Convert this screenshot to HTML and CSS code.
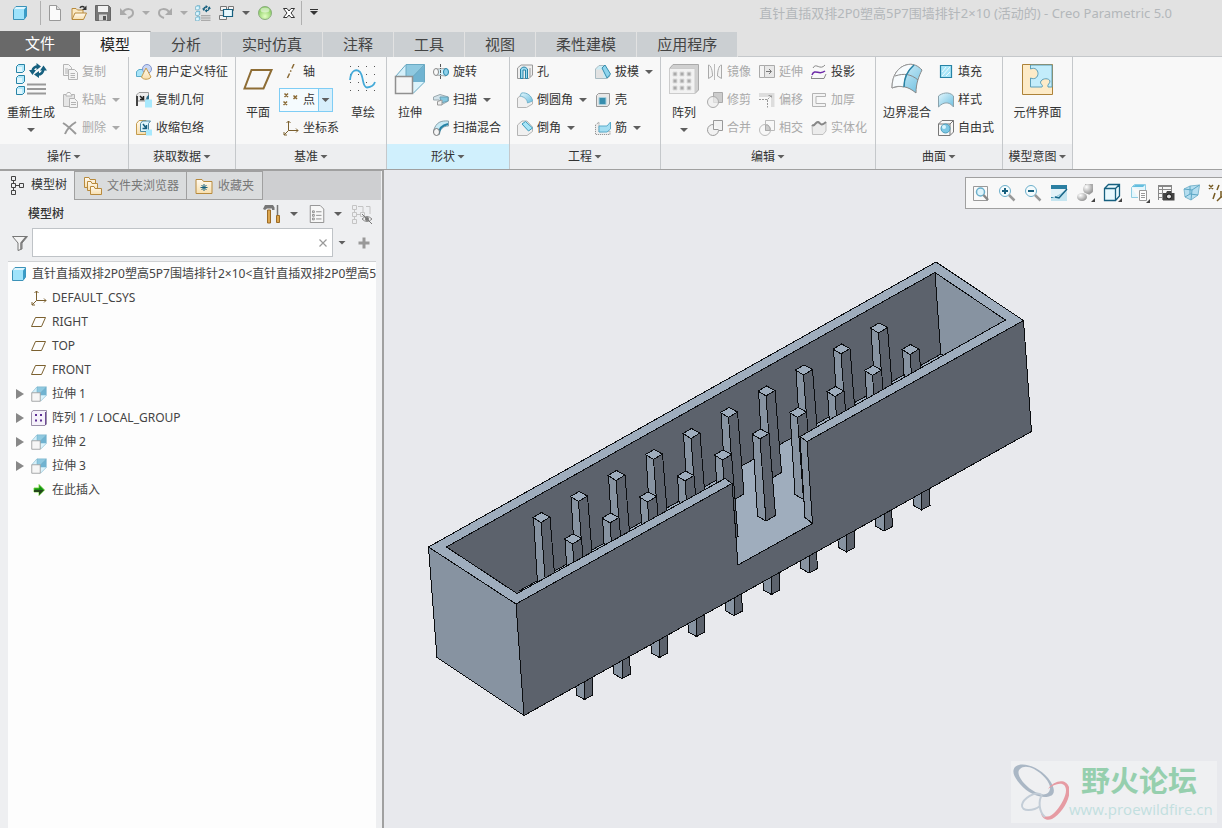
FILE: index.html
```html
<!DOCTYPE html>
<html lang="zh-CN">
<head>
<meta charset="utf-8">
<title>Creo Parametric 5.0</title>
<link rel="stylesheet" href="styles.css">
</head>
<body>
<svg class="defs" aria-hidden="true">
  <defs>
    <linearGradient id="blue" x1="0" y1="0" x2="1" y2="1"><stop offset="0" stop-color="#e4f7fd"/><stop offset="1" stop-color="#6dbfe0"/></linearGradient>
    <linearGradient id="gray" x1="0" y1="0" x2="1" y2="1"><stop offset="0" stop-color="#fafafa"/><stop offset="1" stop-color="#b4b4b4"/></linearGradient>
    <linearGradient id="sand" x1="0" y1="0" x2="0" y2="1"><stop offset="0" stop-color="#fffaf0"/><stop offset="1" stop-color="#f7dfae"/></linearGradient>
    <radialGradient id="green" cx=".5" cy=".75" r=".7"><stop offset="0" stop-color="#e3ffc4"/><stop offset="1" stop-color="#7cc653"/></radialGradient>
    <radialGradient id="orb" cx=".35" cy=".3" r=".8"><stop offset="0" stop-color="#fff"/><stop offset="1" stop-color="#8a8a8a"/></radialGradient>
  </defs>
  <symbol id="i-cube" viewBox="0 0 16 16"><path d="M1.500 4.500L4 1.500H14.500V11L12 14.500H1.500Z" fill="#9fe3fb" stroke="#3c92b8"/><path d="M12 4.500L14.500 1.500V11L12 14.500Z" fill="#3a9cc7"/><path d="M2 4L4 2H14L12 4Z" fill="#dff6fe"/></symbol>
  <symbol id="i-new" viewBox="0 0 16 16"><path d="M2.500 .5H9.500L13.500 4.500V15.500H2.500Z" fill="#fafafa" stroke="#999"/><path d="M9.500 .5V4.500H13.500" fill="#ddd" stroke="#999"/></symbol>
  <symbol id="i-open" viewBox="0 0 16 16"><path d="M1 14V3.500H5L6.500 5H12V8" fill="#fbe9c3" stroke="#b88a3c"/><path d="M1 14.500L4 8H15.500L12.500 14.500Z" fill="url(#sand)" stroke="#b88a3c"/><path d="M9 3C10 1 12 1 13.500 2.500" fill="none" stroke="#333" stroke-width="1.500"/><path d="M15.500 .5V5H11Z" fill="#333"/></symbol>
  <symbol id="i-save" viewBox="0 0 16 16"><path d="M.5 .5H13.500L15.500 2.500V15.500H.5Z" fill="#777" stroke="#666"/><path d="M3 1H13V7H3Z" fill="#f2f2f2"/><path d="M4 9.500H12V15.500H4Z" fill="#d4d4d4"/><path d="M8 11H11V15H8Z" fill="#555"/></symbol>
  <symbol id="i-undo" viewBox="0 0 16 16"><path d="M1 3V10H8Z" fill="#aaa"/><path d="M4 7C7 3 14 3 14 8C14 11 12 12 9 13" fill="none" stroke="#aaa" stroke-width="2"/></symbol>
  <symbol id="i-redo" viewBox="0 0 16 16"><path d="M15 3V10H8Z" fill="#aaa"/><path d="M12 7C9 3 2 3 2 8C2 11 4 12 7 13" fill="none" stroke="#aaa" stroke-width="2"/></symbol>
  <symbol id="i-regen" viewBox="0 0 32 32"><g fill="#b5e9fa" stroke="#2783a6"><path d="M1.500 3.500L3.500 1.500H9.500V7.500L7.500 9.500H1.500Z"/><path d="M1.500 14.500L3.500 12.500H9.500V18.500L7.500 20.500H1.500Z"/><path d="M1.500 25.500L3.500 23.500H9.500V29.500L7.500 31.500H1.500Z"/></g><g fill="#fff"><path d="M2 4H7V9H2Z" opacity=".6"/><path d="M2 15H7V20H2Z" opacity=".6"/><path d="M2 26H7V31H2Z" opacity=".6"/></g><path d="M12 21.500H31M12 26H31M12 30.500H31" stroke="#999" stroke-width="2"/><g fill="none" stroke="#17607f" stroke-width="2.500"><path d="M17.500 8C18 5 20 3.500 23 3.500"/><path d="M28.500 6C28 9.500 26 11.500 23 11.500"/></g><path d="M21.500 0L26 3.500L21.500 7ZM14 7H21L17.500 12ZM25 7.500H32L28.500 2.500ZM24 8L19 11.500L24 15Z" fill="#17607f"/></symbol>
  <symbol id="i-windows" viewBox="0 0 16 16"><g fill="#f4f4f4" stroke="#777"><path d="M1.500 1.500H7.500V5.500H1.500ZM9.500 1.500H14.500V5.500H9.500ZM.5 10.500H7.500V14.500H.5Z"/></g><path d="M4.500 4.500H13.500V11.500H4.500Z" fill="#e8f8fd" stroke="#17607f" stroke-width="1.200"/></symbol>
  <symbol id="i-ball" viewBox="0 0 16 16"><circle cx="8" cy="8" r="6.500" fill="url(#green)" stroke="#8cae80"/><ellipse cx="8" cy="5" rx="4.500" ry="2.500" fill="#fff" opacity=".5"/></symbol>
  <symbol id="i-close" viewBox="0 0 16 16"><path d="M2.500 3.500H6L8 6L10 3.500H13.500L10 8L13.500 12.500H10L8 10L6 12.500H2.500L6 8Z" fill="#fff" stroke="#333"/></symbol>
  <symbol id="i-copy" viewBox="0 0 16 16"><g fill="#f4f4f4" stroke="#b4b4b4"><path d="M1.500 .5H6.500L9.500 3.500V11.500H1.500Z"/><path d="M6.500 5.500H12.500L15.500 8.500V15.500H6.500Z"/></g><path d="M3 5H6M3 7H6M3 9H6M8.500 9.500H13M8.500 11.500H13M8.500 13.500H13" stroke="#b4b4b4"/></symbol>
  <symbol id="i-paste" viewBox="0 0 16 16"><path d="M1.500 2.500H12.500V14.500H1.500Z" fill="#e6e6e6" stroke="#b4b4b4"/><path d="M4 3C4 2 5 2 5.500 .5H8C8 2 10 2 10 4H4Z" fill="#fafafa" stroke="#b4b4b4"/><path d="M7.500 6.500H12.500L15.500 9.500V15.500H7.500Z" fill="#f4f4f4" stroke="#b4b4b4"/><path d="M9 10.500H14M9 12.500H14" stroke="#b4b4b4"/></symbol>
  <symbol id="i-delete" viewBox="0 0 16 16"><path d="M1 3C6 6 10 10 14 14M14 2C9 5 5 9 3 14" stroke="#999" stroke-width="2" fill="none"/></symbol>
  <symbol id="i-udf" viewBox="0 0 16 16"><path d="M.5 7.500L3 5.500H10V12.500H.5Z" fill="#a9e4f8" stroke="#5aaccb"/><circle cx="11" cy="5" r="4.500" fill="#c9d7f5" stroke="#8195cc"/><path d="M10 4L5.500 13C7 16 13 16 15 13Z" fill="url(#sand)" stroke="#c49b4c"/></symbol>
  <symbol id="i-copygeo" viewBox="0 0 16 16"><path d="M.5 3L3 .5H12.500V5L10 7V9H.5Z" fill="#ececec" stroke="#999"/><path d="M1 4V14" stroke="#444" stroke-width="2"/><path d="M4 4L7 7M7.500 4V7.500H4" stroke="#222" stroke-width="1.500" fill="none"/><path d="M10.500 8V5L13 2.500V7.500" fill="#2f6f8c"/><path d="M9 7.500H16V15.500H9Z" fill="#a8e9fd"/></symbol>
  <symbol id="i-shrink" viewBox="0 0 16 16"><path d="M.5 3.500L3 .5H10V14.500H.5Z" fill="url(#sand)" stroke="#c49b4c"/><path d="M4.500 3.500L6.500 1H14.500L12.500 3.500V11.500H4.500Z" fill="#dff5fc" stroke="#4c8ba3"/><path d="M7 4L10 8M10.500 5V8.500H6.500" stroke="#17607f" stroke-width="1.500" fill="none"/><path d="M10 9.500H16V15.500H10Z" fill="#a8e9fd"/></symbol>
  <symbol id="i-plane" viewBox="0 0 32 32"><path d="M9.500 7H29.500L21.500 25.500H2.500Z" fill="none" stroke="#8e6d35" stroke-width="2"/></symbol>
  <symbol id="i-axis" viewBox="0 0 16 16"><path d="M11 0L4 15" stroke="#8a6a35" stroke-width="1.500" stroke-dasharray="5 2 1.500 2" fill="none"/></symbol>
  <symbol id="i-points" viewBox="0 0 16 16"><path d="M1.500 1.500L5 5M5 1.500L1.500 5M10.500 3.500L14 7M14 3.500L10.500 7M.5 9.500L4 13M4 9.500L.5 13" stroke="#8a6a35" stroke-width="1.500" fill="none"/></symbol>
  <symbol id="i-csys" viewBox="0 0 16 16"><path d="M5.500 1V10.500H15M5.500 10.500L1 15M3.500 3L5.500 1L7.500 3M13 8.500L15 10.500L13 12.500M1 12V15H4" stroke="#7b602f" fill="none"/></symbol>
  <symbol id="i-sketch" viewBox="0 0 32 32"><path d="M3 3.500H28M3 11.500H28M3 19.500H28M3 27.500H28" stroke="#555" stroke-dasharray="1 7"/><path d="M3 17C4 6 10 6 13 9C17 14 15 24 20 24.500C25 24 27 22 28 19" fill="none" stroke="#43a9d8" stroke-width="1.800"/></symbol>
  <symbol id="i-extrude" viewBox="0 0 32 32"><path d="M1.500 13.500L12 1.500H30.500V19L19 30.500H1.500Z" fill="#d5f0fa"/><path d="M12 2H30L19 13.500H12Z" fill="#8fc9e0"/><path d="M30.500 2V19H18.500V13.500Z" fill="#70b3d1"/><path d="M18.500 19H30.500L18.500 30.500Z" fill="#dcf4fc"/><path d="M1.500 13.500L12 1.500H30.500V19L19 30.500M19 13.500L30.500 1.500M12 2V13" fill="none" stroke="#6aa9c2"/><path d="M1.500 13.500H18.500V30.500H1.500Z" fill="#f6f6f6" stroke="#909090" stroke-width="1.500"/></symbol>
  <symbol id="i-revolve" viewBox="0 0 16 16"><path d="M3 5L13 4.500V12L3 11Z" fill="#d7f1fa" stroke="#aaa"/><ellipse cx="3" cy="8" rx="2.500" ry="3.500" fill="#fafafa" stroke="#888"/><ellipse cx="13" cy="8" rx="2.500" ry="3.500" fill="#8ed2ec" stroke="#2783a6"/><path d="M7.500 0V16" stroke="#555" stroke-dasharray="3 1 1 1"/></symbol>
  <symbol id="i-sweep" viewBox="0 0 16 16"><path d="M.5 5L7 2.500L15.500 5V9L9 12.500L6 8L.5 8Z" fill="#d3e3ea" stroke="#9aa8ae"/><path d="M7 5L15 5V9L8 11Z" fill="#83c8e1" stroke="#6aa1b6"/><path d="M4.500 9.500L9 8V13H4.500Z" fill="#eee" stroke="#999"/></symbol>
  <symbol id="i-blend" viewBox="0 0 16 16"><path d="M.5 11C3 2 8 .5 15.500 1V6C10 6 7 9 6 15Z" fill="#c8eaf5" stroke="#8aa2ac"/><path d="M6 14C6 8 10 5 15 4" fill="none" stroke="#2783a6" stroke-width="2"/><ellipse cx="3.500" cy="12" rx="3" ry="3.500" fill="#f5f5f5" stroke="#777"/></symbol>
  <symbol id="i-hole" viewBox="0 0 16 16"><path d="M.5 4L4 1H15.500V11L12 14.500H.5Z" fill="#eee" stroke="#999"/><path d="M3.500 5Q7 1 10.500 5V14.500H8.500V6H6V14.500H3.500Z" fill="#9bdaf0" stroke="#2783a6"/><path d="M13 4V13" stroke="#999"/></symbol>
  <symbol id="i-round" viewBox="0 0 16 16"><path d="M.5 6L6 2C11 1 15 5 15.500 10V12L9.500 15.500H.5Z" fill="#f0f0f0" stroke="#b4b4b4"/><path d="M4.500 1C10 0 15 4 15.500 9L10.500 11C10.500 8 8 5 3 4Z" fill="url(#blue)" stroke="#77b5cd"/></symbol>
  <symbol id="i-chamfer" viewBox="0 0 16 16"><path d="M.5 5L5 1H10L15.500 7V11.500L10 15.500H.5Z" fill="#f0f0f0" stroke="#b4b4b4"/><path d="M5 4L8.500 1.500L15.500 8L11.500 11Z" fill="#a7e4f7" stroke="#3c9abb"/></symbol>
  <symbol id="i-draft" viewBox="0 0 16 16"><path d="M.5 5L4 1.500H9L15 12L12 14.500H.5Z" fill="#ccebf4" stroke="#a9bbc2"/><path d="M1 5.500H8V14H1Z" fill="#e2e2e2"/><path d="M7 4L10 1L15.500 10L12 14Z" fill="#8ed4ed" stroke="#378eae"/></symbol>
  <symbol id="i-shell" viewBox="0 0 16 16"><path d="M1.500 3.500L3.500 1.500H14.500V12L12.500 14.500H1.500Z" fill="#e8e8e8" stroke="#999"/><path d="M4 5.500H11V12.500H4Z" fill="#378eae" stroke="#a8cfdc"/></symbol>
  <symbol id="i-rib" viewBox="0 0 16 16"><path d="M.5 5L4 2V12L15 11V14.500H.5Z" fill="#eee" stroke="#888" stroke-dasharray="1 1"/><path d="M4 6H12L15.500 2V9L12 12H4Z" fill="#a4def2" stroke="#5aaccb"/></symbol>
  <symbol id="i-pattern" viewBox="0 0 32 32"><path d="M1.500 5.500L5 1.500H30.500V27L27 30.500H1.500Z" fill="#d0d0d0" stroke="#aaa"/><path d="M1.500 5.500H27V30.500H1.500Z" fill="#f2f2f2" stroke="#ccc"/><path fill="#aaa" stroke="#ddd" d="M5 9h4v4h-4zM12 9h4v4h-4zM19 9h4v4h-4zM5 16h4v4h-4zM12 16h4v4h-4zM19 16h4v4h-4zM5 23h4v4h-4zM12 23h4v4h-4zM19 23h4v4h-4z"/></symbol>
  <symbol id="i-mirror" viewBox="0 0 16 16"><path d="M1.500 1V14.500L5.500 12C5.500 7 4 1 1.500 1ZM14.500 1V14.500L10.500 12C10.500 7 12 1 14.500 1Z" fill="#f4f4f4" stroke="#aaa"/><path d="M7.500 0V16" stroke="#bbb"/></symbol>
  <symbol id="i-trim" viewBox="0 0 16 16"><path d="M6.500 .5H15.500V10.500H6.500Z" fill="#ccc" stroke="#aaa"/><circle cx="6" cy="10" r="5.500" fill="#eee" fill-opacity=".7" stroke="#aaa"/></symbol>
  <symbol id="i-merge" viewBox="0 0 16 16"><path d="M6.500 4V.5H15.500V10.500H11.500M6.500 4V9.500H11.500M11.500 10.500A5.500 5.500 0 1 1 6.500 4.500" fill="#f2f2f2" stroke="#999"/></symbol>
  <symbol id="i-extend" viewBox="0 0 16 16"><path d="M.5 1.500H5.500V13.500H.5Z" fill="#f4f4f4" stroke="#aaa"/><path d="M5.500 1.500H15.500V13.500H5.500Z" fill="#e8e8e8" stroke="#aaa"/><path d="M7 7.500H12M10 5L12.500 7.500L10 10" fill="none" stroke="#777"/></symbol>
  <symbol id="i-offset" viewBox="0 0 16 16"><path d="M0 1H15.500V15H12V5H0Z" fill="#ddd"/><path d="M0 7.500H8.500V15.500M8.500 7.500L12 4M9.500 3.500H12.500V6.500" fill="none" stroke="#999" stroke-dasharray="2 1"/></symbol>
  <symbol id="i-intersect" viewBox="0 0 16 16"><path d="M6.500 .5H15.500V10.500H6.500Z" fill="none" stroke="#bbb"/><circle cx="6" cy="10" r="5.500" fill="none" stroke="#bbb"/><path d="M6.500 5H9L11 8V10.500H6.500Z" fill="#ccc" stroke="#aaa"/></symbol>
  <symbol id="i-project" viewBox="0 0 16 16"><path d="M2 4C5 -2 9 7 14 1M1 12L0 14.500H13L15 10" fill="none" stroke="#888"/><path d="M1 11C4 4 8 12 14 7" fill="none" stroke="#6d2aa8" stroke-width="1.500"/></symbol>
  <symbol id="i-thicken" viewBox="0 0 16 16"><path d="M1.500 1.500H14.500V4.500H5V11.500H14.500V14.500H1.500Z" fill="#f4f4f4" stroke="#b4b4b4"/></symbol>
  <symbol id="i-solidify" viewBox="0 0 16 16"><path d="M1 5C4 7 4 2 7 1.500C10 3 9 7 15 2V11L12 14.500H1.500Z" fill="#ececec" stroke="#c0c0c0"/><path d="M1 5C4 7 4 2 7 2C10 3 9 7 15 2" fill="none" stroke="#888" stroke-width="2"/></symbol>
  <symbol id="i-boundary" viewBox="0 0 32 32"><path d="M1 25C1 11 8 4 15 2C23 0 27 3 31 7C28 13 25 20 25 30C17 23 9 22 1 25Z" fill="url(#blue)" stroke="#888"/><path d="M1 25C1 11 8 4 15 2C18 1 21 1 23 2C16 8 13 15 13 24C9 23 5 23 1 25Z" fill="#f7fbfd" stroke="#999"/><path d="M4 13C13 10 20 11 27 17" fill="none" stroke="#888"/><path d="M23 2C16 8 13 15 13 24" fill="none" stroke="#2783a6" stroke-width="1.500"/></symbol>
  <symbol id="i-fill" viewBox="0 0 16 16"><path d="M2.500 1.500H13.500V13.500H2.500Z" fill="#a9e6f8" stroke="#2783a6" stroke-width="1.200"/><path d="M4 12L12 3M4 8L8 3M8 12L12 8" stroke="#effbff"/></symbol>
  <symbol id="i-style" viewBox="0 0 16 16"><path d="M.5 4C4 1 11 -1 15.500 4V15C11 9 5 10 .5 15Z" fill="url(#blue)" stroke="#8aa2ac"/></symbol>
  <symbol id="i-freestyle" viewBox="0 0 16 16"><path d="M.5 4L4 .5H15.500V12L12 15.500H.5ZM.5 4H12V15.500M12 4L15.500 .5" fill="none" stroke="#777"/><circle cx="7.500" cy="8.500" r="4.500" fill="#7cc7e4" stroke="#4d9ebc"/><circle cx="6" cy="7" r="2" fill="#d8f4fc"/></symbol>
  <symbol id="i-puzzle" viewBox="0 0 32 32"><path d="M.5 1.500H30.500V31.500H.5Z" fill="#fdebc8" stroke="#ad8238"/><path d="M8.500 2V6C13 4 16 7 16 10.500C16 14 13 17 8.500 15V24H20C22 22 17 21 19 18C21 15 27 15 28 18C28 21 25 21 26 24H30V2Z" fill="#c3edfb" stroke="#5d9fb8"/></symbol>
  <symbol id="i-tree" viewBox="0 0 14 20"><path d="M1.500 1.500H5.500V5.500H1.500ZM1.500 8.500H5.500V12.500H1.500ZM1.500 15.500H5.500V19.500H1.500ZM9.500 8.500H13.500V12.500H9.500ZM3.500 5.500V8.500M3.500 12.500V15.500M5.500 10.500H9.500" fill="none" stroke="#444"/></symbol>
  <symbol id="i-folders" viewBox="0 0 20 20"><g fill="url(#sand)" stroke="#b88a3c"><path d="M1.500 1.500H6L7 3.500H12.500V11.500H1.500Z"/><path d="M4.500 5.500H8L9 7.500H14.500V14.500H4.500Z"/><path d="M7.500 10.500H11L12 12.500H18.500V18.500H7.500Z"/></g></symbol>
  <symbol id="i-fav" viewBox="0 0 18 18"><path d="M1 2.500H7L8.500 4.500H17V16.500H1Z" fill="url(#sand)" stroke="#b88a3c"/><path d="M9 7V14M5.500 10.500H12.500M6.500 8L11.500 13M11.500 8L6.500 13" stroke="#17607f"/></symbol>
  <symbol id="i-tools" viewBox="0 0 20 20"><path d="M1 5L3 1H11L12.500 3.500V6H10V4.500H5L3 6Z" fill="#777"/><path d="M5.500 6H8.500V19H5.500Z" fill="#dca64f" stroke="#9c6b26"/><path d="M15.500 1V11" stroke="#777" stroke-width="1.500"/><path d="M14.500 11.500H17.500V18.500H14.500Z" fill="#dca64f" stroke="#9c6b26"/></symbol>
  <symbol id="i-list" viewBox="0 0 18 20"><path d="M1.500 .5H12.500L16.500 4.500V19.500H1.500Z" fill="#f7f7f7" stroke="#888"/><path d="M8 7.500H14M8 11.500H14M8 15.500H14" stroke="#888"/><path d="M4 6.500h2v2h-2zM4 10.500h2v2h-2zM4 14.500h2v2h-2z" fill="none" stroke="#888"/></symbol>
  <symbol id="i-hide" viewBox="0 0 20 20"><path d="M.5 1.500H4.500V5.500H.5ZM.5 8.500H4.500V12.500H.5ZM.5 15.500H4.500V19.500H.5ZM8.500 8.500H12.500V12.500H8.500ZM2.500 5.500V8.500M2.500 12.500V15.500M4.500 10.500H8.500M6 2.500H11V8M14 2.500H18V10" fill="none" stroke="#c4c4c4"/><path d="M10 15Q15 10 20 15Q15 20 10 15Z" fill="#eee" stroke="#888"/><circle cx="15" cy="15" r="2" fill="#777"/><path d="M10 10L20 20" stroke="#777"/></symbol>
  <symbol id="i-funnel" viewBox="0 0 16 16"><path d="M.5 1.500H15.500L10 8V14L6 15.500V8Z" fill="#f4f4f4" stroke="#777"/><path d="M14 2L9 8V14" stroke="#777" stroke-width="1.500" fill="none"/></symbol>
  <symbol id="i-splane" viewBox="0 0 16 16"><path d="M4.500 3.500H14.500L10.500 12.500H.5Z" fill="none" stroke="#7b602f"/></symbol>
  <symbol id="i-group" viewBox="0 0 16 16"><path d="M.5 2.500L2 .5H15.500V14L14 15.500H.5Z" fill="#f5f1fa" stroke="#9a8fa8"/><path d="M4 4h2v2h-2zM9 4h2v2h-2zM4 9.500h2v2h-2zM9 9.500h2v2h-2z" fill="#5e2f95"/><path d="M14.500 2V15" stroke="#6f4b96"/></symbol>
  <symbol id="i-insert" viewBox="0 0 16 16"><path d="M3 6H8V2.500L13.500 8L8 13.500V10H3Z" fill="#149414" stroke="#6ccf32" stroke-width=".8"/><path d="M3 8H13L8 13V10H3Z" fill="#24451a"/></symbol>
  <symbol id="i-refit" viewBox="0 0 18 18"><path d="M1.500 2.500H15.500V16.500H1.500Z" fill="#fafafa" stroke="#999"/><circle cx="8.500" cy="8" r="4" fill="#dff4fb" stroke="#6cafcb" stroke-width="1.500"/><path d="M11.500 11L16 16" stroke="#888" stroke-width="2.500"/></symbol>
  <symbol id="i-zoomin" viewBox="0 0 18 18"><circle cx="7" cy="7" r="5.500" fill="#f4fbfd" stroke="#6cafcb"/><path d="M4 7H10M7 4V10" stroke="#17607f" stroke-width="2"/><path d="M11 11L16.500 16.500" stroke="#999" stroke-width="2.500"/></symbol>
  <symbol id="i-zoomout" viewBox="0 0 18 18"><circle cx="7" cy="7" r="5.500" fill="#f4fbfd" stroke="#6cafcb"/><path d="M4 7H10" stroke="#17607f" stroke-width="2"/><path d="M11 11L16.500 16.500" stroke="#999" stroke-width="2.500"/></symbol>
  <symbol id="i-repaint" viewBox="0 0 18 18"><path d="M1 1H17V17H1Z" fill="#9ed2e6"/><path d="M1 1H17V5C12 8 9 12 4 13L1 15Z" fill="#2b7fa2"/><path d="M1 5H17V6C12 8 9 12 4 13H1Z" fill="#e3f2f8"/><path d="M1 17V14C8 14 13 10 17 5V17Z" fill="#c5e5f0"/><path d="M5 13L9 14L17 5" stroke="#176486" stroke-width="1.500" fill="none"/></symbol>
  <symbol id="i-shade" viewBox="0 0 20 20"><path d="M9 1H17V9L13 12L9 8Z" fill="#aaa"/><circle cx="12" cy="6" r="5" fill="url(#orb)"/><ellipse cx="6" cy="14" rx="5" ry="4" fill="url(#orb)"/><path d="M19 15V19H15Z" fill="#444"/></symbol>
  <symbol id="i-display" viewBox="0 0 20 20"><path d="M1.500 5.500L5.500 1.500H16.500V13L12.500 17.500H1.500ZM1.500 5.500H12.500V17.500M12.500 5.500L16.500 1.500" fill="#e9f9fe" stroke="#17607f" stroke-width="1.300"/><path d="M19 15V19H15Z" fill="#444"/></symbol>
  <symbol id="i-views" viewBox="0 0 20 20"><path d="M1.500 4.500L4.500 1.500H15.500V8M1.500 4.500V14.500H8" fill="#e3f6fc" stroke="#8fcde3"/><path d="M2 4L5 2H15L13 4Z" fill="#64bedf"/><path d="M9.500 7.500H16.500V17.500H9.500Z" fill="#fff" stroke="#999"/><path d="M11 10.500H15M11 12.500H15M11 14.500H15" stroke="#999"/><path d="M20 16V20H16Z" fill="#444"/></symbol>
  <symbol id="i-camera" viewBox="0 0 18 18"><path d="M1.500 1.500H14.500V8M1.500 5.500H14M1.500 9.500H6M1.500 13.500H6M1.500 1.500V16M5.500 1.500V16" stroke="#888" fill="none"/><path d="M1 1H15V3H1Z" fill="#888"/><path d="M6 9H9L10 7H14L15 9H17.500V16.500H6Z" fill="#444"/><circle cx="12" cy="12.500" r="2.500" fill="#ddd" stroke="#111"/></symbol>
  <symbol id="i-persp" viewBox="0 0 18 18"><path d="M1 5L7 2L16.500 1L15 11L8 16L2 13Z" fill="#b5def0" stroke="#7fb8cf"/><path d="M1 5L9 6L8 16M9 6L16.500 1M7 2V10L2 13M7 10L15 11" stroke="#5ba6c4" fill="none"/></symbol>
  <symbol id="i-datum" viewBox="0 0 20 20"><path d="M1 2L5 6M5 2L1 6M11 2L9 7M7 10L5 16M13 8V14H19M13 14L9 18M18 2L15 6" stroke="#755921" stroke-width="1.500" fill="none"/></symbol>
</svg>

<header class="titlebar">
  <div class="quick">
    <button class="qb" aria-label="Creo"><svg class="i16"><use href="#i-cube"/></svg></button>
    <span class="sep wide"></span>
    <button class="qb" aria-label="新建"><svg class="i16"><use href="#i-new"/></svg></button>
    <button class="qb" aria-label="打开"><svg class="i16"><use href="#i-open"/></svg></button>
    <button class="qb" aria-label="保存"><svg class="i16"><use href="#i-save"/></svg></button>
    <button class="qb" aria-label="撤销"><svg class="i16"><use href="#i-undo"/></svg></button>
    <button class="qc" aria-label="撤销列表"><i class="caret dim"></i></button>
    <button class="qb" aria-label="重做"><svg class="i16"><use href="#i-redo"/></svg></button>
    <button class="qc" aria-label="重做列表"><i class="caret dim"></i></button>
    <button class="qb" aria-label="重新生成"><svg class="i16"><use href="#i-regen"/></svg></button>
    <button class="qb" aria-label="窗口"><svg class="i16"><use href="#i-windows"/></svg></button>
    <button class="qc" aria-label="窗口列表"><i class="caret"></i></button>
    <button class="qb" aria-label="状态"><svg class="i16"><use href="#i-ball"/></svg></button>
    <button class="qb" aria-label="关闭"><svg class="i16"><use href="#i-close"/></svg></button>
    <span class="sep"></span>
    <button class="qb more" aria-label="自定义"><i class="caret"></i></button>
  </div>
  <h1 class="title">直针直插双排2P0塑高5P7围墙排针2×10 (活动的) - Creo Parametric 5.0</h1>
</header>

<nav class="tabs">
  <button class="tab file">文件</button>
  <button class="tab active">模型</button>
  <button class="tab">分析</button>
  <button class="tab">实时仿真</button>
  <button class="tab">注释</button>
  <button class="tab">工具</button>
  <button class="tab">视图</button>
  <button class="tab">柔性建模</button>
  <button class="tab">应用程序</button>
</nav>

<div class="ribbon">
  <section class="group g-ops">
    <div class="body">
      <button class="big"><svg class="i32"><use href="#i-regen"/></svg><span>重新生成</span><i class="caret"></i></button>
      <div class="col">
        <button class="small off"><svg class="i16"><use href="#i-copy"/></svg>复制</button>
        <button class="small off"><svg class="i16"><use href="#i-paste"/></svg>粘贴<i class="caret dim"></i></button>
        <button class="small off"><svg class="i16"><use href="#i-delete"/></svg>删除<i class="caret dim"></i></button>
      </div>
    </div>
    <button class="glabel">操作<i class="caret"></i></button>
  </section>
  <section class="group g-data">
    <div class="body">
      <div class="col">
        <button class="small"><svg class="i16"><use href="#i-udf"/></svg>用户定义特征</button>
        <button class="small"><svg class="i16"><use href="#i-copygeo"/></svg>复制几何</button>
        <button class="small"><svg class="i16"><use href="#i-shrink"/></svg>收缩包络</button>
      </div>
    </div>
    <button class="glabel">获取数据<i class="caret"></i></button>
  </section>
  <section class="group g-datum">
    <div class="body">
      <button class="big"><svg class="i32"><use href="#i-plane"/></svg><span>平面</span></button>
      <div class="col">
        <button class="small"><svg class="i16"><use href="#i-axis"/></svg>轴</button>
        <div class="split"><button class="small"><svg class="i16"><use href="#i-points"/></svg>点</button><button class="drop" aria-label="点选项"><i class="caret"></i></button></div>
        <button class="small"><svg class="i16"><use href="#i-csys"/></svg>坐标系</button>
      </div>
      <button class="big"><svg class="i32"><use href="#i-sketch"/></svg><span>草绘</span></button>
    </div>
    <button class="glabel">基准<i class="caret"></i></button>
  </section>
  <section class="group g-shape">
    <div class="body">
      <button class="big"><svg class="i32"><use href="#i-extrude"/></svg><span>拉伸</span></button>
      <div class="col">
        <button class="small"><svg class="i16"><use href="#i-revolve"/></svg>旋转</button>
        <button class="small"><svg class="i16"><use href="#i-sweep"/></svg>扫描<i class="caret"></i></button>
        <button class="small"><svg class="i16"><use href="#i-blend"/></svg>扫描混合</button>
      </div>
    </div>
    <button class="glabel hot">形状<i class="caret"></i></button>
  </section>
  <section class="group g-eng">
    <div class="body">
      <div class="col">
        <button class="small"><svg class="i16"><use href="#i-hole"/></svg>孔</button>
        <button class="small"><svg class="i16"><use href="#i-round"/></svg>倒圆角<i class="caret"></i></button>
        <button class="small"><svg class="i16"><use href="#i-chamfer"/></svg>倒角<i class="caret"></i></button>
      </div>
      <div class="col">
        <button class="small"><svg class="i16"><use href="#i-draft"/></svg>拔模<i class="caret"></i></button>
        <button class="small"><svg class="i16"><use href="#i-shell"/></svg>壳</button>
        <button class="small"><svg class="i16"><use href="#i-rib"/></svg>筋<i class="caret"></i></button>
      </div>
    </div>
    <button class="glabel">工程<i class="caret"></i></button>
  </section>
  <section class="group g-edit">
    <div class="body">
      <button class="big"><svg class="i32"><use href="#i-pattern"/></svg><span>阵列</span><i class="caret"></i></button>
      <div class="col">
        <button class="small off"><svg class="i16"><use href="#i-mirror"/></svg>镜像</button>
        <button class="small off"><svg class="i16"><use href="#i-trim"/></svg>修剪</button>
        <button class="small off"><svg class="i16"><use href="#i-merge"/></svg>合并</button>
      </div>
      <div class="col">
        <button class="small off"><svg class="i16"><use href="#i-extend"/></svg>延伸</button>
        <button class="small off"><svg class="i16"><use href="#i-offset"/></svg>偏移</button>
        <button class="small off"><svg class="i16"><use href="#i-intersect"/></svg>相交</button>
      </div>
      <div class="col">
        <button class="small"><svg class="i16"><use href="#i-project"/></svg>投影</button>
        <button class="small off"><svg class="i16"><use href="#i-thicken"/></svg>加厚</button>
        <button class="small off"><svg class="i16"><use href="#i-solidify"/></svg>实体化</button>
      </div>
    </div>
    <button class="glabel">编辑<i class="caret"></i></button>
  </section>
  <section class="group g-surf">
    <div class="body">
      <button class="big"><svg class="i32"><use href="#i-boundary"/></svg><span>边界混合</span></button>
      <div class="col">
        <button class="small"><svg class="i16"><use href="#i-fill"/></svg>填充</button>
        <button class="small"><svg class="i16"><use href="#i-style"/></svg>样式</button>
        <button class="small"><svg class="i16"><use href="#i-freestyle"/></svg>自由式</button>
      </div>
    </div>
    <button class="glabel">曲面<i class="caret"></i></button>
  </section>
  <section class="group g-intent">
    <div class="body">
      <button class="big"><svg class="i32"><use href="#i-puzzle"/></svg><span>元件界面</span></button>
    </div>
    <button class="glabel">模型意图<i class="caret"></i></button>
  </section>
</div>

<main class="work">
  <aside class="panel">
    <div class="ptabs">
      <button class="ptab active"><svg class="itree"><use href="#i-tree"/></svg>模型树</button>
      <button class="ptab"><svg class="i20"><use href="#i-folders"/></svg>文件夹浏览器</button>
      <button class="ptab"><svg class="i18"><use href="#i-fav"/></svg>收藏夹</button>
    </div>
    <div class="phead">
      <h2>模型树</h2>
      <button aria-label="设置"><svg class="i20"><use href="#i-tools"/></svg><i class="caret"></i></button>
      <button aria-label="显示"><svg class="i18"><use href="#i-list"/></svg><i class="caret"></i></button>
      <button aria-label="隐藏"><svg class="i20"><use href="#i-hide"/></svg></button>
    </div>
    <div class="filter">
      <svg class="i16"><use href="#i-funnel"/></svg>
      <div class="field"><input type="text" aria-label="过滤"><button aria-label="清除"><svg class="i8" viewBox="0 0 8 8"><path d="M.5 .5L7.500 7.500M7.500 .5L.5 7.500" stroke="#999" stroke-width="1.200"/></svg></button></div>
      <button aria-label="过滤选项"><i class="caret"></i></button>
      <button aria-label="添加"><svg class="i12" viewBox="0 0 12 12"><path d="M6 .5V11.500M.5 6H11.500" stroke="#999" stroke-width="3"/></svg></button>
    </div>
    <ul class="tree">
      <li class="root"><svg class="i16"><use href="#i-cube"/></svg>直针直插双排2P0塑高5P7围墙排针2×10&lt;直针直插双排2P0塑高5P7围墙排针2×10&gt;</li>
      <li><svg class="i16"><use href="#i-csys"/></svg>DEFAULT_CSYS</li>
      <li><svg class="i16"><use href="#i-splane"/></svg>RIGHT</li>
      <li><svg class="i16"><use href="#i-splane"/></svg>TOP</li>
      <li><svg class="i16"><use href="#i-splane"/></svg>FRONT</li>
      <li class="node"><svg class="i16"><use href="#i-extrude"/></svg>拉伸 1</li>
      <li class="node"><svg class="i16"><use href="#i-group"/></svg>阵列 1 / LOCAL_GROUP</li>
      <li class="node"><svg class="i16"><use href="#i-extrude"/></svg>拉伸 2</li>
      <li class="node"><svg class="i16"><use href="#i-extrude"/></svg>拉伸 3</li>
      <li><svg class="i16"><use href="#i-insert"/></svg>在此插入</li>
    </ul>
  </aside>

  <section class="viewport">
    <svg class="model" viewBox="384 170 838 658" preserveAspectRatio="xMidYMid meet" role="img" aria-label="排针模型">
      <defs>
        <g id="pin">
          <path d="M-8 5L-.5 10L5.500 92L-3 87Z" fill="#8793a1"/>
          <path d="M-.5 10L8.500 4.500L15 86.500L5.500 92Z" fill="#5c626c"/>
          <path d="M0 0L8.500 4.500L-.5 10L-8.500 5Z" fill="#9fadbd"/>
        </g>
        <g id="leg">
          <path d="M-9.500 -25L-8 -4.500L0 0V-30Z" fill="#8793a1"/>
          <path d="M0 -30V0L8.500 -4.500L7 -30Z" fill="#5c626c"/>
        </g>
        <g id="pinrow">
          <use href="#pin" x="337.500" y="-189.500"/><use href="#pin" x="300" y="-168.500"/><use href="#pin" x="262.500" y="-147.500"/><use href="#pin" x="225" y="-126.500"/><use href="#pin" x="187.500" y="-105"/><use href="#pin" x="150" y="-84"/><use href="#pin" x="112.500" y="-63"/><use href="#pin" x="75" y="-42"/><use href="#pin" x="37.500" y="-21"/><use href="#pin"/>
        </g>
        <g id="legrow">
          <use href="#leg" x="337" y="-189.500"/><use href="#leg" x="299.500" y="-168.500"/><use href="#leg" x="262" y="-147.500"/><use href="#leg" x="224.500" y="-126.500"/><use href="#leg" x="187" y="-105"/><use href="#leg" x="149.500" y="-84"/><use href="#leg" x="112" y="-63"/><use href="#leg" x="75" y="-42"/><use href="#leg" x="37.500" y="-21"/><use href="#leg"/>
        </g>
      </defs>
      <g stroke="#0b0d10" stroke-width="1" stroke-linejoin="round" shape-rendering="crispEdges">
        <use href="#legrow" x="584.500" y="699.500"/>
        <path d="M428.500 547L936 262L1023.500 320.500L516 604Z" fill="#9fadbd"/>
        <path d="M446.500 547L935 272.500L941 354L517 593.500Z" fill="#5c626c"/>
        <path d="M935 272.500L1005.500 320L941 357Z" fill="#8793a1"/>
        <path d="M519 591L941 354L945 357L814 528L738 570Z" fill="#9fadbd"/>
        <use href="#pinrow" x="541.500" y="512.500"/>
        <use href="#pinrow" x="573" y="534"/>
        <path d="M516 604L517 593.500L725 478.500L732 483.500L738 565L812.500 523.500L805 517.500L800 436.500L1005.500 320L1023.500 320.500L1031.500 431.500L524 715.500Z" fill="#5c626c" stroke="none"/>
        <path d="M516 604L446.500 547L517 593.500L725 478.500L732 483.500Z" fill="#9fadbd" stroke="none"/>
        <path d="M517 593.500L725 478.500L732 483.500L516 604" fill="none"/>
        <path d="M800 436.500L1005.500 320L1023.500 320.500L807 441.500Z" fill="#9fadbd" stroke="none"/>
        <path d="M807 441.500L800 436.500L1005.500 320M1023.500 320.500L807 441.500" fill="none"/>
        <path d="M800 436.500L807 441.500L812.500 523.500L805 517.500Z" fill="#8793a1"/>
        <path d="M732 483.500L738 565L812.500 523.500M732 483.500L736 536" fill="none"/>
        <path d="M428.500 547L516 604L524 715.500L437 657.500Z" fill="#8793a1"/>
        <path d="M446.500 547L517 593.500M524 715.500L1031.500 431.500L1023.500 320.500" fill="none"/>
      </g>
    </svg>
    <div class="viewbar">
      <button aria-label="重新调整"><svg class="i18"><use href="#i-refit"/></svg></button>
      <button aria-label="放大"><svg class="i18"><use href="#i-zoomin"/></svg></button>
      <button aria-label="缩小"><svg class="i18"><use href="#i-zoomout"/></svg></button>
      <button aria-label="重画"><svg class="i18"><use href="#i-repaint"/></svg></button>
      <button class="fly" aria-label="渲染"><svg class="i20"><use href="#i-shade"/></svg></button>
      <button class="fly" aria-label="显示样式"><svg class="i20"><use href="#i-display"/></svg></button>
      <button class="fly" aria-label="已保存方向"><svg class="i20"><use href="#i-views"/></svg></button>
      <button aria-label="视图管理器"><svg class="i18"><use href="#i-camera"/></svg></button>
      <button aria-label="透视图"><svg class="i18"><use href="#i-persp"/></svg></button>
      <button aria-label="基准显示"><svg class="i20"><use href="#i-datum"/></svg></button>
    </div>
    <div class="mark">
      <svg class="logo" viewBox="0 0 58 60" aria-hidden="true"><path fill-rule="evenodd" fill="#aab7c5" d="M4 6C10 0 27 5 37 17C45 27 44 34 39 35C33 38 18 34 9 23C2 15 1 10 4 6ZM9 8C4 12 12 23 21 29C30 35 38 35 39 28C40 22 32 13 23 8C17 5 12 5 9 8Z"/><path fill-rule="evenodd" fill="#e69ba3" d="M37 28C43 19 55 17 58 26C61 36 51 53 41 58C36 60 31 58 30 52C35 58 40 56 45 50C53 40 58 29 53 24C49 21 42 24 37 28Z"/><path fill="none" stroke="#c3cdd7" stroke-width="2" d="M31 34C24 29 12 38 11 44C10 51 23 50 29 45M31 34C27 40 28 51 34 56"/></svg>
      <div class="words"><strong>野火论坛</strong><a href="#forum">www.proewildfire.cn</a></div>
    </div>
  </section>
</main>
</body>
</html>
```

FILE: styles.css
```css
* { box-sizing: border-box; }
body {
  margin: 0;
  min-height: 100vh;
  display: flex;
  flex-direction: column;
  overflow: hidden;
  background: #e2e2e2;
  color: #333;
  font: 12px/16px "Noto Sans", "Noto Sans CJK SC", sans-serif;
}
button {
  margin: 0;
  padding: 0;
  border: 0;
  background: none;
  color: inherit;
  font: inherit;
  white-space: nowrap;
}
h1, h2 { margin: 0; font-weight: 400; }
svg { display: block; flex: none; }
.defs { position: absolute; width: 0; height: 0; }
.i8 { width: 8px; height: 8px; }
.i12 { width: 12px; height: 12px; }
.i16 { width: 16px; height: 16px; }
.i18 { width: 18px; height: 18px; }
.i20 { width: 20px; height: 20px; }
.i32 { width: 32px; height: 32px; }
.caret {
  display: block;
  flex: none;
  width: 8px;
  height: 4px;
  background: #5e5e5e;
  clip-path: polygon(0 0, 100% 0, 50% 100%);
}
.caret.dim { background: #aaa; }

/* title bar */
.titlebar { display: flex; justify-content: space-between; height: 31px; padding: 0 50px 0 8px; }
.quick { display: flex; align-items: center; height: 26px; }
.qb { display: flex; justify-content: center; align-items: center; width: 24px; height: 24px; }
.qc { display: flex; justify-content: center; width: 14px; }
.sep { width: 1px; height: 24px; background: #b0b0b0; }
.sep.wide { margin: 0 2px 0 8px; }
.more::before { content: ""; width: 8px; height: 1px; background: #333; margin: 0 -8px 7px 0; }
.more .caret { background: #333; }
.title { color: #b3b7ba; font-size: 13px; line-height: 27px; white-space: nowrap; }

/* ribbon tabs */
.tabs { display: flex; height: 26px; align-items: stretch; box-shadow: inset 0 -1px #c5c8cb; }
.tab {
  margin-top: 1px;
  padding: 0 20px 2px;
  border-right: 1px solid #e2e2e2;
  background: #cbcfd2;
  color: #444;
  font-size: 15px;
  line-height: 22px;
}
.tab.file { margin-top: 0; padding: 0 25px 3px; border: 0; background: #696969; color: #fff; }
.tab.active { margin-top: 0; border-top: 1px solid #a0a0a0; border-right-color: #cbcfd2; background: #f8f8f8; color: #222; }

/* ribbon */
.ribbon { display: flex; background: #f8f8f8; border-bottom: 1px solid #a0a0a0; }
.group { display: flex; flex-direction: column; flex: none; border-right: 1px solid #c5c8cb; }
.body { display: grid; height: 87px; padding-top: 1px; align-items: start; }
.big { display: flex; flex-direction: column; align-items: center; padding-top: 5px; }
.big span { margin-top: 10px; }
.big .caret { margin-top: 7px; }
.col { display: flex; flex-direction: column; align-items: flex-start; }
.small { display: flex; align-items: center; gap: 4px; height: 28px; }
.small .caret { margin-left: 2px; }
.small.off { color: #aaa; }
.glabel { display: flex; justify-content: center; align-items: center; gap: 2px; height: 25px; background: #edeef0; }
.glabel.hot { background: #d0f0fd; }
.g-ops { width: 129px; }
.g-ops .body { grid-template-columns: 62px 1fr; }
.g-data { width: 107px; }
.g-data .body { padding-left: 7px; }
.g-datum { width: 151px; }
.g-datum .body { grid-template-columns: 44px 60px 46px; }
.g-datum .col { padding-left: 3px; }
.g-shape { width: 123px; }
.g-shape .body { grid-template-columns: 46px 1fr; }
.g-eng { width: 151px; }
.g-eng .body { grid-template-columns: 78px 1fr; padding-left: 7px; }
.g-edit { width: 215px; }
.g-edit .body { grid-template-columns: 46px 52px 52px 1fr; }
.g-surf { width: 127px; }
.g-surf .body { grid-template-columns: 62px 1fr; }
.g-intent { width: 70px; }
.split { display: flex; height: 24px; margin: 2px 0 2px -4px; border: 1px solid #7fcdf5; background: #f5fbfe; }
.split .small { height: 22px; padding: 0 3px; }
.split .drop { display: flex; align-items: center; justify-content: center; width: 14px; border-left: 1px solid #7fcdf5; background: #d8effb; }

/* work area */
.work { display: flex; flex: 1; }
.panel {
  display: flex;
  flex-direction: column;
  flex: none;
  width: 384px;
  border-top: 1px solid #a0a0a0;
  border-right: 2px solid #a0a0a0;
  background: #eeeff1;
}
.ptabs { display: flex; height: 29px; margin-right: 1px; background: #cecfd1; }
.ptab {
  display: flex;
  align-items: center;
  gap: 4px;
  padding: 0 7px 0 8px;
  border: solid #a0a0a0;
  border-width: 1px 1px 1px 0;
  background: #dadcdd;
  color: #777;
}
.ptab:last-child { gap: 5px; padding-right: 8px; }
.ptab.active { gap: 7px; padding: 0 7px 2px 10px; border-width: 0 1px 0 0; background: #eeeff1; color: #333; }
.itree { width: 14px; height: 20px; }
.phead { display: flex; align-items: center; gap: 10px; height: 28px; padding: 0 10px 0 28px; }
.phead h2 { flex: 1; font-size: 12px; font-weight: 500; }
.phead button { display: flex; align-items: center; gap: 8px; }
.filter { display: flex; align-items: center; height: 29px; padding: 0 12px; }
.field { display: flex; align-items: center; flex: 1; height: 29px; margin: 0 5px 0 4px; border: 1px solid #bfc3c7; background: #fff; }
.field input { flex: 1; min-width: 0; height: 27px; padding: 0 6px; border: 0; outline: 0; background: none; font: inherit; }
.field button { padding: 0 5px; }
.filter > button + button { margin-left: 12px; }
.tree {
  flex: 1;
  margin: 4px 6px 0 8px;
  padding: 0;
  border-top: 1px solid #cfd1d3;
  background: #fdfdfd;
  list-style: none;
  overflow: hidden;
}
.tree li { display: flex; align-items: center; gap: 5px; height: 24px; padding-left: 23px; color: #444; white-space: nowrap; }
.tree .root { padding-left: 3px; }
.tree .node { padding-left: 8px; }
.tree .node::before { content: ""; width: 8px; height: 10px; margin-right: 2px; background: #888; clip-path: polygon(0 0, 100% 50%, 0 100%); }

.viewport { position: relative; flex: 1; min-width: 0; background: #e8e9ed; overflow: hidden; }
.model { width: 100%; height: 100%; }
.viewbar {
  position: absolute;
  top: 7px;
  right: 0;
  display: flex;
  width: 257px;
  height: 32px;
  padding-left: 2px;
  border: 1px solid #a0a0a0;
  border-right: 0;
  background: #f8f8f8;
  overflow: hidden;
}
.viewbar button { display: flex; flex: none; justify-content: center; align-items: center; width: 26px; }
.viewbar .fly { width: 27px; }
.mark {
  position: absolute;
  right: 5px;
  bottom: 5px;
  display: flex;
  width: 206px;
  height: 62px;
  background: #eff0f2;
}
.logo { width: 58px; height: 60px; }
.words { display: flex; flex-direction: column; }
.words strong { margin-left: 12px; color: #96cfae; font-size: 29px; font-weight: 700; line-height: 40px; }
.words a { color: #c2dfdf; font-family: "Open Sans", sans-serif; font-size: 15px; line-height: 16px; text-decoration: none; }
```
